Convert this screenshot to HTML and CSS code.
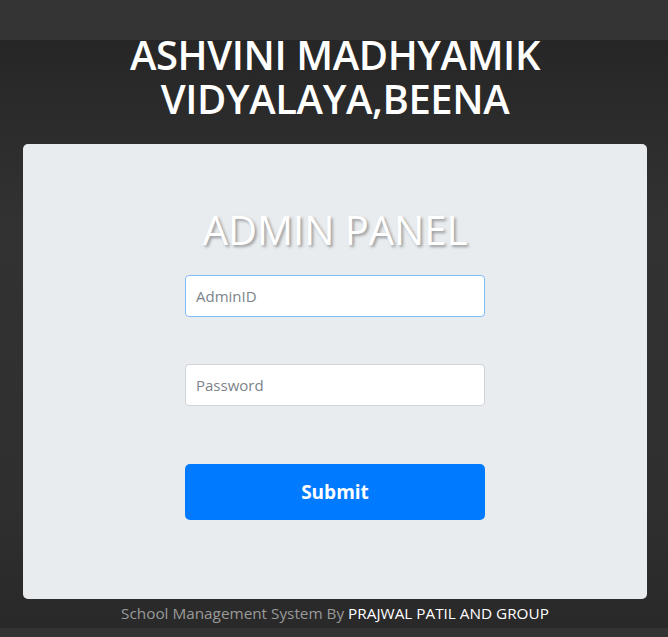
FILE: index.html
```html
<!DOCTYPE html>
<html>
<head>
<meta charset="utf-8">
<link rel="stylesheet" href="styles.css">
</head>
<body>
<div class="topbar"></div>
<main class="page">
  <h1 class="school">ASHVINI MADHYAMIK<br>VIDYALAYA,BEENA</h1>
  <section class="card">
    <h2 class="panel-title">ADMIN PANEL</h2>
    <form class="login">
      <input class="field focused" type="text" placeholder="AdminID">
      <input class="field" type="password" placeholder="Password">
      <button class="submit" type="button">Submit</button>
    </form>
  </section>
  <p class="footer">School Management System By <span class="author">PRAJWAL PATIL AND GROUP</span></p>
</main>
</body>
</html>
```
FILE: styles.css
```css
* { box-sizing: border-box; }
html, body { margin: 0; padding: 0; }
body {
  width: 668px;
  height: 637px;
  overflow: hidden;
  font-family: "Open Sans", "Noto Sans", sans-serif;
  background: linear-gradient(#262626 6%, #323232 35%, #2f2f2f 80%, #292929 98.6%, #333333 98.6%);
}
.topbar {
  height: 40px;
  background: #343434;
}
.page {
  display: flex;
  flex-direction: column;
  align-items: center;
  padding-left: 2px;
}
.school {
  margin: -7px 0 23px;
  color: #fff;
  font-size: 40px;
  font-weight: 600;
  line-height: 44px;
  text-align: center;
  letter-spacing: -0.4px;
}
.card {
  width: 624px;
  height: 455px;
  background: #e9ecef;
  border-radius: 5px;
  display: flex;
  flex-direction: column;
  align-items: center;
  padding-top: 61px;
}
.panel-title {
  margin: 0 0 20px;
  color: #fff;
  font-size: 40px;
  font-weight: 400;
  line-height: 50px;
  text-shadow: 2px 2px 3px rgba(0,0,0,0.35);
}
.login {
  width: 300px;
  display: flex;
  flex-direction: column;
}
.field {
  height: 42px;
  border: 1px solid #ced4da;
  border-radius: 4px;
  background: #fff;
  padding: 0 10px;
  font-family: inherit;
  font-size: 15px;
  color: #495057;
  margin-bottom: 47px;
}
.field::placeholder { color: #7c838a; }
.field.focused { border-color: #80bdff; }
.field:last-of-type { margin-bottom: 58px; }
.submit {
  height: 56px;
  border: none;
  border-radius: 5px;
  background: #007bff;
  color: #fff;
  font-family: inherit;
  font-size: 19px;
  font-weight: 700;
}
.footer {
  margin: 4px 0 0;
  font-size: 15.3px;
  color: #9a9a9a;
  line-height: 20px;
}
.author { color: #fff; }
```
